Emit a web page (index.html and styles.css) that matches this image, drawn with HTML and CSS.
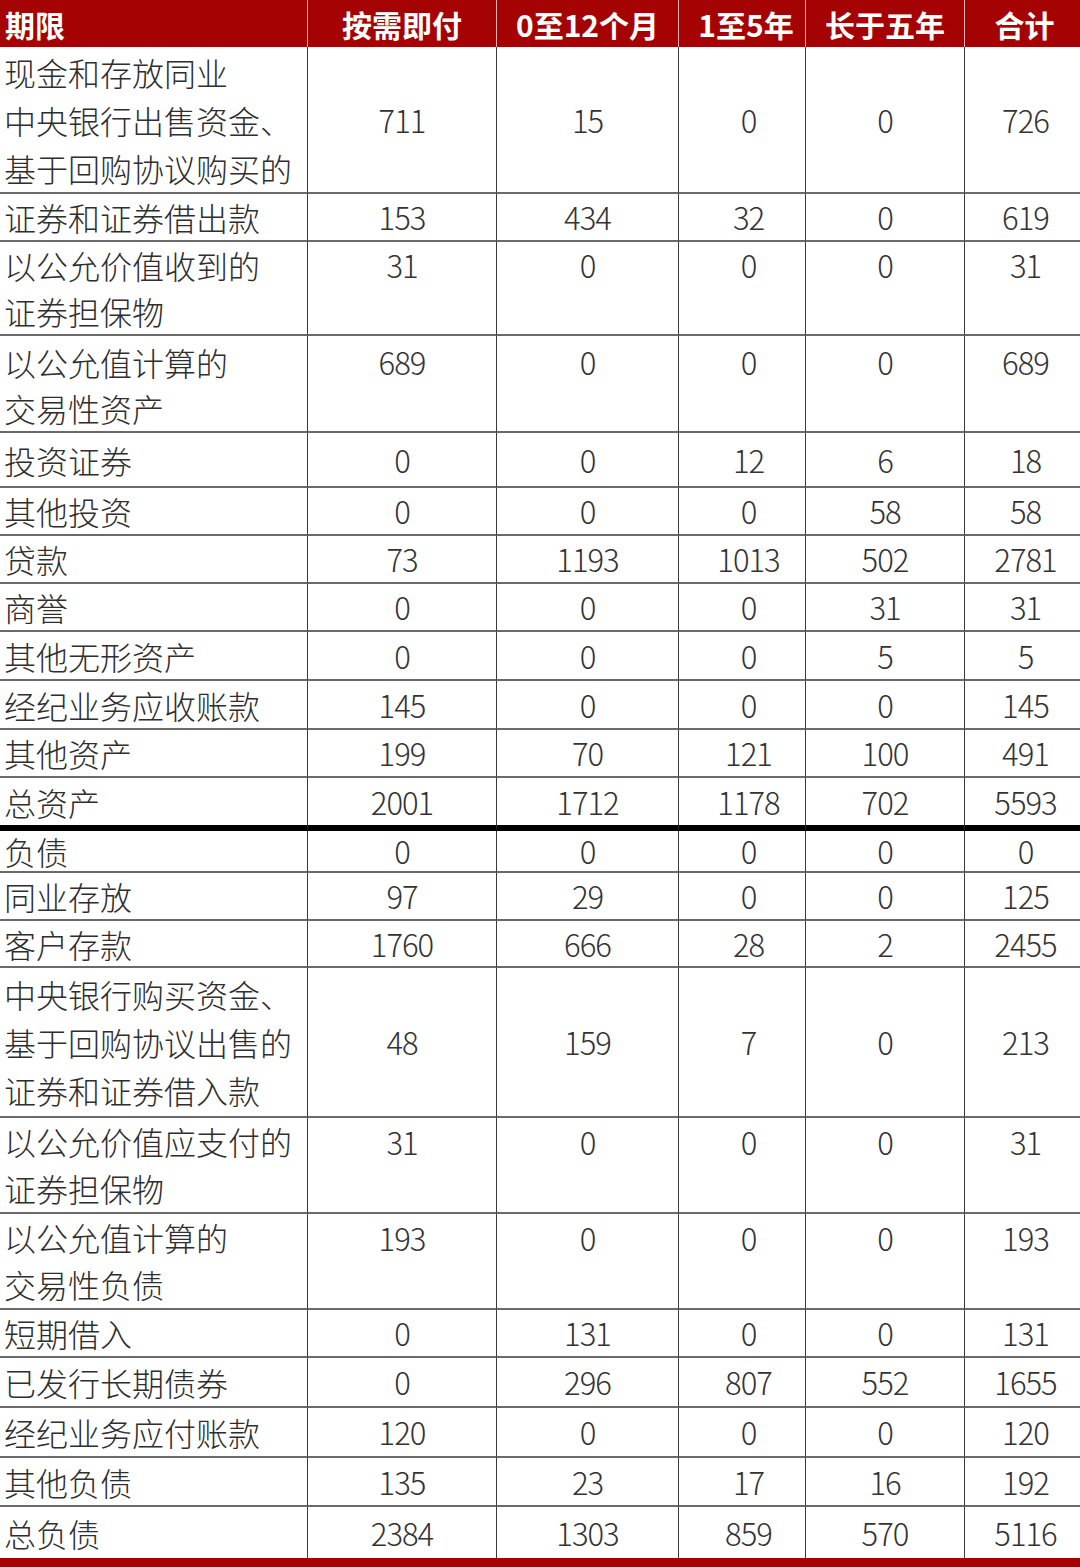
FILE: index.html
```html
<!DOCTYPE html>
<html lang="zh-CN">
<head>
<meta charset="utf-8">
<title>期限结构</title>
<link rel="stylesheet" href="styles.css">
</head>
<body>
<div class="sheet">
<table class="maturity">
  <colgroup>
    <col class="c-label"><col class="c-a"><col class="c-b"><col class="c-c"><col class="c-d"><col class="c-e">
  </colgroup>
  <thead>
    <tr class="head">
      <th class="label">期限</th><th>按需即付</th><th>0至12个月</th><th>1至5年</th><th>长于五年</th><th>合计</th>
    </tr>
  </thead>
  <tbody>
    <tr class="h147 three"><td class="label">现金和存放同业<br>中央银行出售资金、<br>基于回购协议购买的</td><td>711</td><td>15</td><td>0</td><td>0</td><td>726</td></tr>
    <tr class="h48"><td class="label">证券和证券借出款</td><td>153</td><td>434</td><td>32</td><td>0</td><td>619</td></tr>
    <tr class="h93 two"><td class="label">以公允价值收到的<br>证券担保物</td><td>31</td><td>0</td><td>0</td><td>0</td><td>31</td></tr>
    <tr class="h97 two pad3"><td class="label">以公允值计算的<br>交易性资产</td><td>689</td><td>0</td><td>0</td><td>0</td><td>689</td></tr>
    <tr class="h55"><td class="label">投资证券</td><td>0</td><td>0</td><td>12</td><td>6</td><td>18</td></tr>
    <tr class="h48"><td class="label">其他投资</td><td>0</td><td>0</td><td>0</td><td>58</td><td>58</td></tr>
    <tr class="h48"><td class="label">贷款</td><td>73</td><td>1193</td><td>1013</td><td>502</td><td>2781</td></tr>
    <tr class="h48"><td class="label">商誉</td><td>0</td><td>0</td><td>0</td><td>31</td><td>31</td></tr>
    <tr class="h49"><td class="label">其他无形资产</td><td>0</td><td>0</td><td>0</td><td>5</td><td>5</td></tr>
    <tr class="h49"><td class="label">经纪业务应收账款</td><td>145</td><td>0</td><td>0</td><td>0</td><td>145</td></tr>
    <tr class="h48"><td class="label">其他资产</td><td>199</td><td>70</td><td>121</td><td>100</td><td>491</td></tr>
    <tr class="h53 total"><td class="label">总资产</td><td>2001</td><td>1712</td><td>1178</td><td>702</td><td>5593</td></tr>
    <tr class="h42"><td class="label">负债</td><td>0</td><td>0</td><td>0</td><td>0</td><td>0</td></tr>
    <tr class="h48"><td class="label">同业存放</td><td>97</td><td>29</td><td>0</td><td>0</td><td>125</td></tr>
    <tr class="h47"><td class="label">客户存款</td><td>1760</td><td>666</td><td>28</td><td>2</td><td>2455</td></tr>
    <tr class="h150 three"><td class="label">中央银行购买资金、<br>基于回购协议出售的<br>证券和证券借入款</td><td>48</td><td>159</td><td>7</td><td>0</td><td>213</td></tr>
    <tr class="h96 two"><td class="label">以公允价值应支付的<br>证券担保物</td><td>31</td><td>0</td><td>0</td><td>0</td><td>31</td></tr>
    <tr class="h96 two"><td class="label">以公允值计算的<br>交易性负债</td><td>193</td><td>0</td><td>0</td><td>0</td><td>193</td></tr>
    <tr class="h48"><td class="label">短期借入</td><td>0</td><td>131</td><td>0</td><td>0</td><td>131</td></tr>
    <tr class="h50"><td class="label">已发行长期债券</td><td>0</td><td>296</td><td>807</td><td>552</td><td>1655</td></tr>
    <tr class="h50"><td class="label">经纪业务应付账款</td><td>120</td><td>0</td><td>0</td><td>0</td><td>120</td></tr>
    <tr class="h49"><td class="label">其他负债</td><td>135</td><td>23</td><td>17</td><td>16</td><td>192</td></tr>
    <tr class="h51 last"><td class="label">总负债</td><td>2384</td><td>1303</td><td>859</td><td>570</td><td>5116</td></tr>
  </tbody>
</table>
<div class="bottom-bar"></div>
</div>
</body>
</html>
```

FILE: styles.css
```css
* { box-sizing: border-box; }

html, body {
  margin: 0;
  padding: 0;
  background: #ffffff;
}

.sheet {
  width: 1080px;
}

.maturity {
  width: 1080px;
  table-layout: fixed;
  border-collapse: separate;
  border-spacing: 0;
  font-family: "Noto Sans CJK SC", "Noto Sans", sans-serif;
  color: #2b2b2b;
}

.c-label { width: 307px; }
.c-a { width: 189px; }
.c-b { width: 182px; }
.c-c { width: 127px; }
.c-d { width: 159px; }
.c-e { width: 116px; }

.head {
  height: 47px;
}

.head th {
  background: #a50303;
  color: #ffffff;
  font-size: 30px;
  font-weight: 700;
  line-height: 40px;
  padding: 0;
  text-align: center;
  vertical-align: middle;
  border-left: 1px solid #e3b4b4;
  white-space: nowrap;
}

.head th.label {
  border-left: none;
  text-align: left;
  padding-left: 5px;
}

.head th:nth-child(4) { padding-left: 8px; }
.head th:nth-child(6) { padding-left: 4px; }

.maturity td {
  padding: 0;
  text-align: center;
  vertical-align: middle;
  border-left: 1px solid #3a3a3a;
  border-bottom: 2px solid #6a6a6a;
  font-size: 31px;
  font-weight: 300;
  line-height: 40px;
  white-space: nowrap;
}

.maturity td.label {
  border-left: none;
  text-align: left;
  padding-left: 4px;
  font-size: 32px;
  font-weight: 300;
  color: #2e2e2e;
}

.maturity td:not(.label) {
  font-weight: 300;
  letter-spacing: -1px;
  color: #333333;
}

.maturity td:nth-child(4) { padding-left: 13px; }
.maturity td:nth-child(6) { padding-left: 6px; }

.three td {
  line-height: 48px;
}

.two td {
  line-height: 46px;
  vertical-align: top;
}

.h96.two td { line-height: 47px; }

.pad3 td { padding-top: 3px; }

.maturity .total td {
  border-bottom: 6px solid #000000;
}

.maturity .last td {
  border-bottom: none;
}

.h42 { height: 42px; }
.h47 { height: 47px; }
.h48 { height: 48px; }
.h49 { height: 49px; }
.h50 { height: 50px; }
.h51 { height: 51px; }
.h53 { height: 53px; }
.h55 { height: 55px; }
.h93 { height: 93px; }
.h96 { height: 96px; }
.h97 { height: 97px; }
.h147 { height: 147px; }
.h150 { height: 150px; }

.bottom-bar {
  height: 10px;
  background: #a50303;
}
```
